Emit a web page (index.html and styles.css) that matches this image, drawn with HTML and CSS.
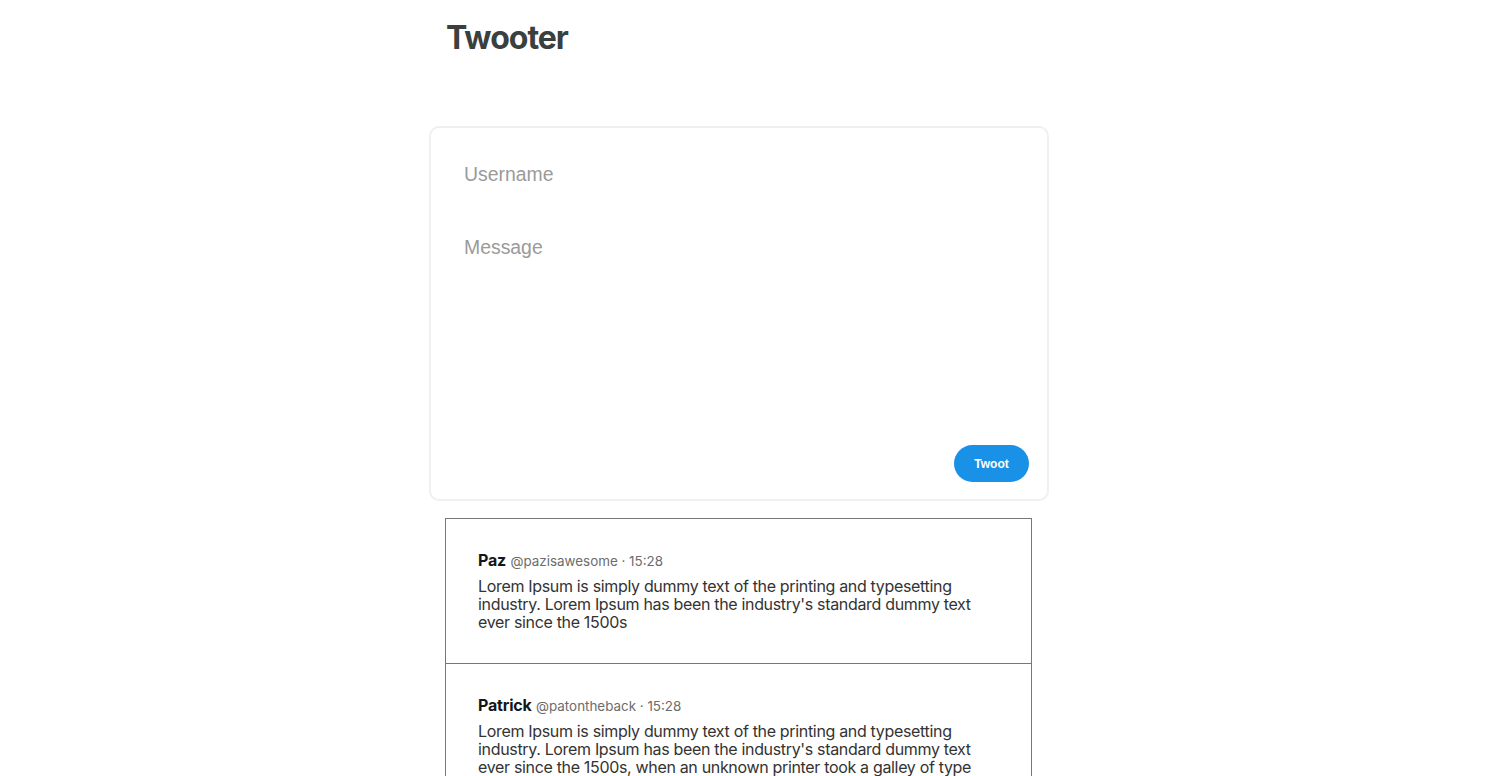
FILE: index.html
```html
<!DOCTYPE html>
<html>
<head>
<meta charset="utf-8">
<link rel="stylesheet" href="styles.css">
</head>
<body>
<main class="app">
  <h1 class="title">Twooter</h1>
  <form class="composer">
    <input class="field" type="text" placeholder="Username">
    <textarea class="field area" placeholder="Message"></textarea>
    <div class="actions"><button class="btn" type="button">Twoot</button></div>
  </form>
  <ul class="feed">
    <li class="tweet">
      <div class="meta"><span class="name">Paz</span> <span class="handle">@pazisawesome · 15:28</span></div>
      <p class="text">Lorem Ipsum is simply dummy text of the printing and typesetting industry. Lorem Ipsum has been the industry's standard dummy text ever since the 1500s</p>
    </li>
    <li class="tweet">
      <div class="meta"><span class="name">Patrick</span> <span class="handle">@patontheback · 15:28</span></div>
      <p class="text">Lorem Ipsum is simply dummy text of the printing and typesetting industry. Lorem Ipsum has been the industry's standard dummy text ever since the 1500s, when an unknown printer took a galley of type and scrambled it to make a type specimen book.</p>
    </li>
  </ul>
</main>
</body>
</html>
```
FILE: styles.css
```css
body {
  margin: 0;
  background: #fff;
  font-family: Inter, Roboto, "Liberation Sans", sans-serif;
}
.app {
  width: 620px;
  margin-left: 429px;
}
.title {
  margin: 0;
  padding: 18px 17px 0;
  height: 126px;
  box-sizing: border-box;
  font-size: 32px;
  font-weight: 700;
  letter-spacing: -1px;
  color: #3a3f40;
  line-height: 40px;
}
.composer {
  display: flex;
  flex-direction: column;
  border: 2px solid #f0f0f0;
  border-radius: 10px;
  height: 375px;
  box-sizing: border-box;
  padding: 0 18px 17px;
}
.field {
  border: none;
  outline: none;
  font-family: "Liberation Sans", Arial, sans-serif;
  font-size: 19.4px;
  color: #333;
  padding: 0 15px;
  background: transparent;
}
.field::placeholder { color: #9a9a9a; }
input.field { height: 40px; margin-top: 26px; }
.area {
  resize: none;
  flex: 1;
  margin-top: 37px;
  line-height: 24px;
  padding-top: 4px;
}
.actions {
  display: flex;
  justify-content: flex-end;
}
.btn {
  width: 75px;
  height: 37px;
  border: none;
  border-radius: 19px;
  background: #1991e6;
  color: #fff;
  font-family: "Liberation Sans", Arial, sans-serif;
  font-weight: 700;
  font-size: 12px;
}
.feed {
  list-style: none;
  margin: 17px 17px 0 16px;
  padding: 0;
  border: 1px solid #777;
  border-bottom: none;
}
.tweet {
  padding: 32px 32px 32px;
  border-bottom: 1px solid #777;
}
.meta {
  line-height: 18px;
  height: 18px;
}
.name {
  font-weight: 700;
  font-size: 16px;
  letter-spacing: -0.2px;
  color: #14171a;
}
.handle {
  font-size: 13.4px;
  color: #6c6c6c;
}
.text {
  margin: 8px 0 0;
  font-size: 16px;
  letter-spacing: -0.33px;
  line-height: 18px;
  color: #333;
}
```
